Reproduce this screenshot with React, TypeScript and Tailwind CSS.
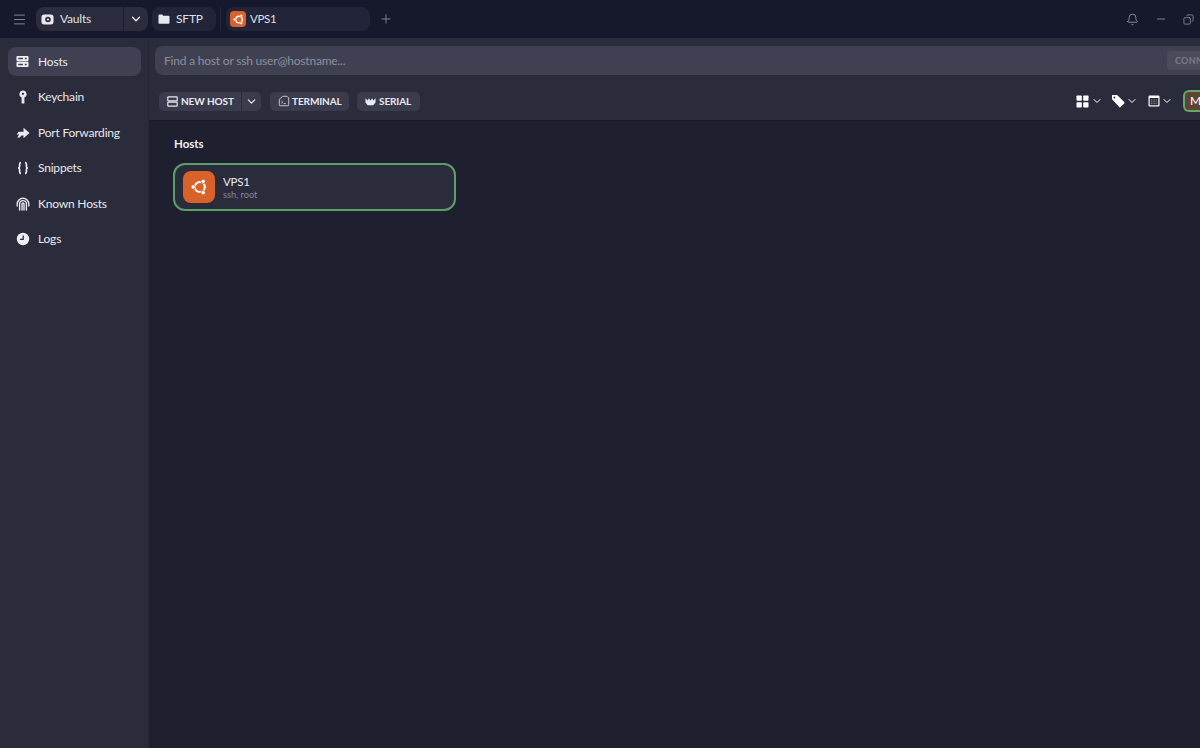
import { Bell, ChevronDown, Menu, Minus, Plus, Copy } from 'lucide-react';

const font = { fontFamily: '"Lato", "Liberation Sans", sans-serif' };

const UbuntuIcon = ({ size }: { size: number }) => (
  <svg width={size} height={size} viewBox="0 0 24 24" fill="none">
    <circle cx="13" cy="12" r="6" stroke="#fff" strokeWidth="2.6" />
    <circle cx="5" cy="12" r="2.6" fill="#fff" stroke="#d9622b" strokeWidth="1" />
    <circle cx="17" cy="5.2" r="2.6" fill="#fff" stroke="#d9622b" strokeWidth="1" />
    <circle cx="17" cy="18.8" r="2.6" fill="#fff" stroke="#d9622b" strokeWidth="1" />
  </svg>
);

const ServerIcon = () => (
  <svg width="13" height="13" viewBox="0 0 14 14" fill="#eeeff3">
    <rect x="0.5" y="1" width="13" height="5.6" rx="1.2" />
    <rect x="0.5" y="7.4" width="13" height="5.6" rx="1.2" />
    <path d="M2.5 3h5v1.6h-5ZM9.5 3h2v1.6h-2ZM2.5 9.4h5V11h-5ZM9.5 9.4h2V11h-2Z" fill="#3f4152" />
  </svg>
);

const ServerOutlineIcon = () => (
  <svg width="11" height="11" viewBox="0 0 14 14" fill="none" stroke="#e8e9ee" strokeWidth="1.5">
    <rect x="1" y="1.2" width="12" height="5" rx="0.8" />
    <rect x="1" y="7.8" width="12" height="5" rx="0.8" />
  </svg>
);

const KeyIcon = () => (
  <svg width="14" height="14" viewBox="0 0 14 14" fill="#e8e9ee">
    <path fillRule="evenodd" d="M7 0.5a3.6 3.6 0 0 1 1.4 6.9V13.5H5.6V7.4A3.6 3.6 0 0 1 7 0.5Zm0 2.2a1.1 1.1 0 1 0 0 2.2 1.1 1.1 0 0 0 0-2.2Z" />
  </svg>
);

const ForwardIcon = () => (
  <svg width="14" height="14" viewBox="0 0 14 14" fill="#e8e9ee">
    <path d="M7.5 1.8 13.5 7l-6 5.2V9.6H5.4L3.8 11.4H1.2l2-3H0.6l2.2-2.6h4.7Z" />
  </svg>
);

const BracesIcon = () => (
  <svg width="14" height="14" viewBox="0 0 14 14" fill="none" stroke="#e8e9ee" strokeWidth="1.7">
    <path d="M5 1.5C3.6 1.5 3.6 2.5 3.6 4v1.5C3.6 6.5 3.1 7 2 7c1.1 0 1.6.5 1.6 1.5V10c0 1.5 0 2.5 1.4 2.5" />
    <path d="M9 1.5c1.4 0 1.4 1 1.4 2.5v1.5c0 1 .5 1.5 1.6 1.5-1.1 0-1.6.5-1.6 1.5V10c0 1.5 0 2.5-1.4 2.5" />
  </svg>
);

const FingerprintIcon = () => (
  <svg width="14" height="14" viewBox="0 0 14 14" fill="none" stroke="#e8e9ee" strokeWidth="1.4" strokeLinecap="round">
    <path d="M1.2 9V7a5.8 5.8 0 0 1 11.6 0v2" />
    <path d="M3.6 13V7a3.4 3.4 0 0 1 6.8 0v6" />
    <path d="M6 13V7a1 1 0 0 1 2 0v6" />
  </svg>
);

const ClockIcon = () => (
  <svg width="14" height="14" viewBox="0 0 14 14">
    <circle cx="7" cy="7" r="6.2" fill="#eeeff3" />
    <path d="M7.2 3.4V7.4H4" fill="none" stroke="#2a2c3c" strokeWidth="1.3" />
  </svg>
);

const VaultIcon = () => (
  <svg width="13" height="13" viewBox="0 0 14 14">
    <path d="M3.5 1.5h7a3 3 0 0 1 3 3v5a3 3 0 0 1-3 3h-7a3 3 0 0 1-3-3v-5a3 3 0 0 1 3-3Z" fill="#e8e9ee" />
    <circle cx="7.5" cy="7" r="3" fill="#2b2d3e" />
    <circle cx="7.5" cy="7" r="1.2" fill="#e8e9ee" />
  </svg>
);

const FolderIcon = () => (
  <svg width="12" height="12" viewBox="0 0 12 12" fill="#e8e9ee">
    <path d="M0.5 2.5a1 1 0 0 1 1-1h2.7l1 1.2h5.3a1 1 0 0 1 1 1v6a1 1 0 0 1-1 1h-9a1 1 0 0 1-1-1Z" />
  </svg>
);

const TerminalIcon = () => (
  <svg width="12" height="12" viewBox="0 0 14 14" fill="none" stroke="#c9cad3" strokeWidth="1.1">
    <path d="M1.5 5 5.5 1.5h5l2 2v8a1 1 0 0 1-1 1h-9a1 1 0 0 1-1-1Z" />
    <path d="m4 7 1.5 1.3L4 9.6M6.5 10H9" />
  </svg>
);

const CrownIcon = () => (
  <svg width="11" height="11" viewBox="0 0 12 12" fill="#e8e9ee">
    <path d="M0.5 2.5 3 5l1.2-2.5L6 5l1.8-2.5L9 5l2.5-2.5V7L9 10H3L0.5 7Z" />
  </svg>
);

const GridIcon = () => (
  <svg width="13" height="13" viewBox="0 0 13 13" fill="#fff">
    <rect x="0.5" y="0.5" width="5.3" height="5.3" rx="0.7" />
    <rect x="7.2" y="0.5" width="5.3" height="5.3" rx="0.7" />
    <rect x="0.5" y="7.2" width="5.3" height="5.3" rx="0.7" />
    <rect x="7.2" y="7.2" width="5.3" height="5.3" rx="0.7" />
  </svg>
);

const TagIcon = () => (
  <svg width="14" height="14" viewBox="0 0 14 14" fill="#fff">
    <path fillRule="evenodd" d="M1.5 1h4.2a1 1 0 0 1 .7.3l6.8 6.8a1 1 0 0 1 0 1.4l-3.6 3.6a1 1 0 0 1-1.4 0L1.3 5.6A1 1 0 0 1 1 4.9V1.5a.5.5 0 0 1 .5-.5Zm1.9 1.6a.9.9 0 1 0 0 1.8.9.9 0 0 0 0-1.8Z" />
  </svg>
);

const CalendarIcon = () => (
  <svg width="12" height="12" viewBox="0 0 12 12">
    <rect x="0.5" y="0.5" width="11" height="11" rx="1.2" fill="#fff" />
    <rect x="1.7" y="3" width="8.6" height="7.3" fill="#2a2c3c" />
    <path d="M3 5h6M3 6.8h6M3 8.6h6" stroke="#9a9ba8" strokeWidth="0.8" strokeDasharray="1 0.6" />
  </svg>
);

const navItems = [
  { label: 'Hosts', icon: <ServerIcon />, active: true },
  { label: 'Keychain', icon: <KeyIcon /> },
  { label: 'Port Forwarding', icon: <ForwardIcon /> },
  { label: 'Snippets', icon: <BracesIcon /> },
  { label: 'Known Hosts', icon: <FingerprintIcon /> },
  { label: 'Logs', icon: <ClockIcon /> },
];

const TopBar = () => (
  <div className="flex h-[38px] shrink-0 items-center bg-[#16182b] pl-[12px] text-[12px] tracking-[-0.2px] text-[#dfe0e6]">
    <Menu size={15} strokeWidth={1.5} className="text-[#8b8c99]" />
    <div className="ml-[9px] flex h-[24px] w-[112px] items-center rounded-[8px] bg-[#2b2d3e]">
      <div className="flex h-full w-[88px] items-center gap-[6px] border-r border-[#1c1e2e] pl-[5px]">
        <VaultIcon />
        <span>Vaults</span>
      </div>
      <ChevronDown size={14} strokeWidth={2.2} className="ml-[5px] text-[#eeeff3]" />
    </div>
    <div className="ml-[4px] flex h-[24px] w-[64px] items-center gap-[6px] rounded-[8px] bg-[#22243a] pl-[6px]">
      <FolderIcon />
      <span>SFTP</span>
    </div>
    <div className="ml-[4px] h-[24px] w-px bg-[#22243a]" />
    <div className="ml-[5px] flex h-[24px] w-[144px] items-center gap-[4px] rounded-[8px] bg-[#22243a] pl-[4px]">
      <div className="flex h-[16px] w-[16px] items-center justify-center rounded-[4px] bg-[#d9622b]">
        <UbuntuIcon size={13} />
      </div>
      <span className="text-[11.5px] tracking-[-0.3px]">VPS1</span>
    </div>
    <Plus size={14} strokeWidth={1.5} className="ml-[9px] text-[#8b8c99]" />
    <div className="ml-auto flex items-center gap-[16px] pr-[6px] text-[#9a9ba8]">
      <Bell size={13} strokeWidth={1.6} />
      <Minus size={12} strokeWidth={1.6} />
      <Copy size={11} strokeWidth={1.6} className="-scale-x-100" />
    </div>
  </div>
);

const Sidebar = () => (
  <nav className="flex w-[149px] shrink-0 flex-col gap-[6.5px] border-r border-[#26283a] bg-[#2a2c3c] pl-[8px] pr-[7px] pt-[9px]">
    {navItems.map((item) => (
      <div
        key={item.label}
        className={`flex h-[29px] items-center gap-[8px] rounded-[8px] pl-[7px] text-[12px] tracking-[-0.2px] text-[#e8e9ee] ${
          item.active ? 'bg-[#3f4152]' : ''
        }`}
      >
        <span className="flex w-[15px] justify-center">{item.icon}</span>
        {item.label}
      </div>
    ))}
  </nav>
);

const Toolbar = () => (
  <div className="flex h-[83px] shrink-0 flex-col overflow-hidden border-b border-[#1a1c2b] bg-[#2a2c3c]">
    <div className="ml-[6px] mt-[8px] flex h-[29px] items-center justify-between rounded-l-[8px] bg-[#3f4152] pl-[9px]">
      <span className="text-[12px] tracking-[-0.2px] text-[#8e8f9d]">Find a host or ssh user@hostname...</span>
      <div className="flex h-[19px] w-[33px] items-center overflow-hidden rounded-l-[4px] bg-[#4a4c5c] pl-[8px] text-[9px] font-bold text-[#787986]">
        <span className="tracking-[0.3px]">CONN</span>
      </div>
    </div>
    <div className="mt-[15px] flex items-center pl-[10px] text-[10px] font-bold tracking-[-0.1px] text-[#e8e9ee]">
      <div className="flex h-[19px] w-[102px] items-center rounded-[5px] bg-[#3a3c4d]">
        <div className="flex h-full w-[83px] items-center gap-[3px] border-r border-[#2a2c3c] pl-[8px]">
          <ServerOutlineIcon />
          NEW HOST
        </div>
        <ChevronDown size={13} strokeWidth={2.2} className="ml-[3px]" />
      </div>
      <div className="ml-[9px] flex h-[19px] w-[79px] items-center gap-[2px] rounded-[5px] bg-[#3a3c4d] pl-[8px]">
        <TerminalIcon />
        TERMINAL
      </div>
      <div className="ml-[8px] flex h-[19px] w-[63px] items-center gap-[3px] rounded-[5px] bg-[#3a3c4d] pl-[8px]">
        <CrownIcon />
        SERIAL
      </div>
      <div className="ml-auto flex items-center">
        <GridIcon />
        <ChevronDown size={12} strokeWidth={2} className="ml-[2px] text-white" />
        <span className="ml-[8px]"><TagIcon /></span>
        <ChevronDown size={12} strokeWidth={2} className="ml-[1px] text-white" />
        <span className="ml-[10px]"><CalendarIcon /></span>
        <ChevronDown size={12} strokeWidth={2} className="ml-[1px] text-white" />
        <div className="ml-[10px] flex h-[22px] w-[17px] items-center overflow-hidden rounded-l-[6px] border-y-2 border-l-2 border-[#62a868] bg-[#5f4334] pl-[5px] text-[12px] font-normal text-white">
          M
        </div>
      </div>
    </div>
  </div>
);

const HostCard = () => (
  <div className="mt-[11px] flex h-[48px] w-[283px] items-center gap-[8px] rounded-[12px] border-2 border-[#5d9d68] bg-[#2a2c3c] pl-[8px]">
    <div className="flex h-[32px] w-[32px] items-center justify-center rounded-[8px] bg-[#d9622b]">
      <UbuntuIcon size={20} />
    </div>
    <div className="flex flex-col">
      <span className="text-[11.5px] leading-[15px] tracking-[-0.2px] text-[#e8e9ee]">VPS1</span>
      <span className="text-[9.2px] leading-[12px] text-[#85869a]">ssh, root</span>
    </div>
  </div>
);

export default function App() {
  return (
    <div className="flex h-[748px] w-[1200px] flex-col overflow-hidden bg-[#1e2030]" style={font}>
      <TopBar />
      <div className="flex min-h-0 flex-1">
        <Sidebar />
        <main className="flex min-w-0 flex-1 flex-col">
          <Toolbar />
          <div className="pl-[24px] pt-[15px]">
            <h2 className="ml-px text-[11.5px] font-bold leading-[16px] text-[#eeeff3]">Hosts</h2>
            <HostCard />
          </div>
        </main>
      </div>
    </div>
  );
}
